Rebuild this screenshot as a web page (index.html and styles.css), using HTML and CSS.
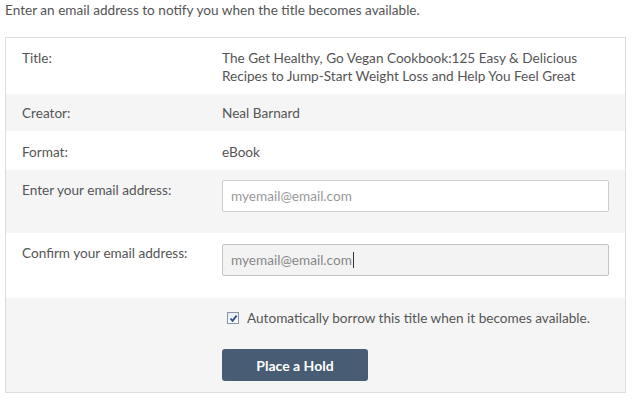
FILE: index.html
```html
<!DOCTYPE html>
<html>
<head>
<meta charset="utf-8">
<link rel="stylesheet" href="styles.css">
</head>
<body>
<p class="intro">Enter an email address to notify you when the title becomes available.</p>
<div class="panel">
  <div class="row row-title">
    <div class="label">Title:</div>
    <div class="value">The Get Healthy, Go Vegan Cookbook:125 Easy &amp; Delicious Recipes to Jump-Start Weight Loss and Help You Feel Great</div>
  </div>
  <div class="row row-creator alt">
    <div class="label">Creator:</div>
    <div class="value">Neal Barnard</div>
  </div>
  <div class="row row-format">
    <div class="label">Format:</div>
    <div class="value">eBook</div>
  </div>
  <div class="row row-email alt">
    <div class="label">Enter your email address:</div>
    <div class="value"><div class="field placeholder">myemail@email.com</div></div>
  </div>
  <div class="row row-confirm">
    <div class="label">Confirm your email address:</div>
    <div class="value"><div class="field focused">myemail@email.com<span class="caret"></span></div></div>
  </div>
  <div class="row row-actions alt">
    <div class="label"></div>
    <div class="value">
      <div class="check-line">
        <span class="checkbox"><svg width="9" height="9" viewBox="0 0 9 9"><path d="M1.5 4.5 L3.5 6.8 L7.6 1.6" fill="none" stroke="#2b4c8c" stroke-width="1.8"/></svg></span>
        <span>Automatically borrow this title when it becomes available.</span>
      </div>
      <button class="hold">Place a Hold</button>
    </div>
  </div>
</div>
</body>
</html>
```
FILE: styles.css
```css
* { box-sizing: border-box; }
html, body { margin: 0; background: #fff; }
body {
  font-family: Lato, "Liberation Sans", sans-serif;
  font-size: 13.6px;
  color: #555;
  padding: 0 7px 0 5px;
}
.intro {
  margin: 0;
  padding-top: 1px;
  line-height: 18px;
  height: 37px;
}
.panel {
  border: 1px solid #ddd;
  width: 621px;
  height: 356px;
}
.row {
  display: grid;
  grid-template-columns: 200px 387px;
  padding-left: 16px;
  line-height: 18px;
}
.alt { background: #f5f5f5; }
.row-title { height: 56px; padding-top: 11px; }
.row-creator { height: 37px; padding-top: 10px; }
.row-format { height: 39px; padding-top: 12px; }
.row-email { height: 63px; padding-top: 10px; }
.row-email .label { padding-top: 1px; }
.row-confirm { height: 65px; padding-top: 11px; }
.row-confirm .label { padding-top: 0; }
.row-actions { height: 94px; padding-top: 11px; }
.field {
  height: 32px;
  border: 1px solid #ccc;
  border-radius: 2px;
  background: #fff;
  padding: 6px 8px;
  color: #999;
  display: flex;
  align-items: center;
}
.field.focused { background: #f3f3f3; border-color: #c4c4c4; color: #888; }
.caret {
  display: inline-block;
  width: 1px;
  height: 16px;
  background: #333;
  margin-left: 1px;
}
.check-line {
  display: flex;
  align-items: center;
  gap: 8px;
  padding-left: 5px;
  height: 18px;
}
.checkbox {
  width: 12px;
  height: 12px;
  border: 1px solid #8a94a6;
  background: linear-gradient(#e8ecf4, #fbfcfe);
  display: flex;
  align-items: center;
  justify-content: center;
}
.hold {
  display: block;
  margin-top: 22px;
  width: 146px;
  height: 32px;
  border: none;
  border-radius: 3px;
  background: #485c74;
  color: #fff;
  font-family: Lato, "Liberation Sans", sans-serif;
  font-weight: bold;
  font-size: 14px;
  padding: 0;
}
```
